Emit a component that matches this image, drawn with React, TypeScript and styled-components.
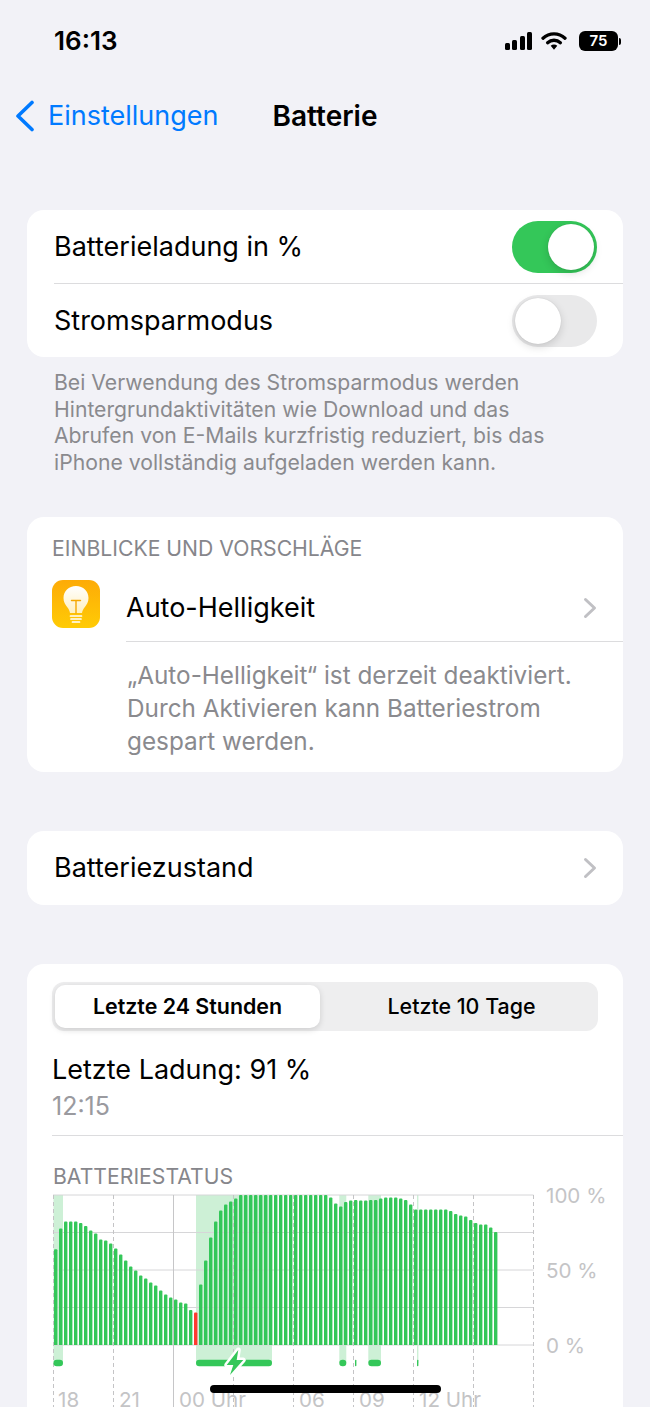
import React from 'react';
import styled, { createGlobalStyle } from 'styled-components';

const GlobalStyle = createGlobalStyle`
  html, body {
    margin: 0;
    padding: 0;
    background: #f2f2f7;
  }
  body {
    font-family: Inter, "Liberation Sans", sans-serif;
    color: #000;
  }
`;

// battery level per bar, left to right
const levels = [
  63.8, 77.6, 82.4, 82.4, 82.4, 81.3, 79.3, 76.4, 74.4, 70.4, 69.6, 67.6, 64.4, 60.4, 56.4,
  52.4, 49.6, 46.4, 44.4, 41.6, 39.6, 36.4, 33.6, 31.6, 30.4, 28.4, 27.6, 23.3, 21.6, 40.4,
  56.4, 71.6, 82.4, 89.6, 93.6, 95.6, 97.6, 100, 100, 100, 100, 100, 100, 100, 100, 100,
  100, 100, 100, 100, 100, 100, 100, 100, 100, 98.4, 94.4, 92.4, 95.3, 96.4, 96.7, 96.4,
  96.4, 96.7, 96.7, 97.6, 98.4, 98.4, 98.4, 97.6, 96.7, 93.6, 90.4, 90.4, 90.4, 90.4, 90.4,
  90.4, 90.4, 89.3, 87.3, 86.4, 85.6, 83.3, 81.3, 80.4, 80.4, 78.4, 75.3,
];
const RED_BAR = 28;

// all chart coordinates are relative to the svg corner
const PLOT_TOP = 1;
const PLOT_BOTTOM = 151;
const PILL_Y = 169;
const gridX = [0.5, 60.5, 120.5, 180.5, 240.5, 300.5, 360.5, 420.5, 480.5];
const SOLID_X = 120.5;
const gridY = [1, 38.5, 76, 113.5, 151];
const charging = [
  { x: 0.5, w: 9.5, pill: true, band: true },
  { x: 143, w: 76, pill: true, band: true },
  { x: 286.3, w: 7, pill: true, band: true },
  { x: 302, w: 1.4, pill: true, band: false },
  { x: 315.3, w: 12.7, pill: true, band: true },
  { x: 364, w: 1.4, pill: true, band: true },
];
const hours = [
  { x: 5, label: '18' },
  { x: 66, label: '21' },
  { x: 126, label: '00 Uhr' },
  { x: 246, label: '06' },
  { x: 306, label: '09' },
  { x: 366, label: '12 Uhr' },
];
const percents = [
  { y: 9, label: '100 %' },
  { y: 84, label: '50 %' },
  { y: 159, label: '0 %' },
];

const Chevron = () => (
  <ChevronIcon viewBox="0 0 14 22" fill="none">
    <path d="M2.5 2.5 11.5 11 2.5 19.5" stroke="#c0c0c4" strokeWidth="3" strokeLinecap="round" strokeLinejoin="round" />
  </ChevronIcon>
);

const BulbIcon = () => (
  <IconTile>
    <svg width="48" height="48" viewBox="0 0 48 48" fill="none">
      <defs>
        <linearGradient id="glass" x1="0" y1="0" x2="0" y2="1">
          <stop offset="0" stopColor="#ffffff" />
          <stop offset="1" stopColor="#fff0c0" />
        </linearGradient>
      </defs>
      <path
        d="M24 6c-7.300 0-12.500 5.400-12.500 12 0 3.800 1.700 6.500 3.600 9 1.400 1.800 2.500 3.700 2.900 6h12c.4-2.300 1.500-4.200 2.900-6 1.900-2.500 3.600-5.200 3.600-9C36.500 11.400 31.300 6 24 6z"
        fill="url(#glass)"
      />
      <path d="M19.500 20.500h9M24 20.500V33" stroke="#f5a800" strokeWidth="1.400" strokeLinecap="round" />
      <path d="M18.500 36h11M19 39h10M20.500 42h7" stroke="#fff" strokeWidth="1.700" strokeLinecap="round" />
    </svg>
  </IconTile>
);

const WifiIcon = () => (
  <svg width="26" height="20" viewBox="0 0 26 20" fill="none">
    <path d="M2 7.200C8.200 1.500 17.800 1.500 24 7.200" stroke="#000" strokeWidth="3.300" strokeLinecap="round" />
    <path d="M6.600 11.700c3.700-3.300 9.100-3.300 12.800 0" stroke="#000" strokeWidth="3.300" strokeLinecap="round" />
    <path d="M9.700 14.800 13 18.700l3.300-3.900c-1.900-1.600-4.700-1.600-6.600 0z" fill="#000" />
  </svg>
);

const BatteryChart = () => (
  <ChartSvg width="570" height="213" viewBox="0 0 570 213">
    {charging.filter((c) => c.band).map((c) => (
      <rect key={c.x} x={c.x} y={PLOT_TOP} width={c.w} height={PILL_Y - PLOT_TOP} fill="#cdf0d6" />
    ))}
    {gridY.map((y) => (
      <line key={y} x1="0" x2="480.5" y1={y} y2={y} stroke="#d6d6d8" strokeWidth="1" />
    ))}
    {gridX.map((x) => (
      <line
        key={x}
        x1={x}
        x2={x}
        y1={PLOT_TOP}
        y2="213"
        stroke={x === SOLID_X ? '#c6c6c8' : '#c4c4c6'}
        strokeWidth="1"
        strokeDasharray={x === SOLID_X ? undefined : '4 3'}
      />
    ))}
    {levels.map((level, i) => {
      const h = (level / 100) * 150;
      return (
        <path
          key={i}
          d={`M${1 + i * 5} ${PLOT_BOTTOM}v${-h + 1}q0 -1 1 -1h1.400q1 0 1 1v${h - 1}z`}
          fill={i === RED_BAR ? '#ff3b30' : '#34c759'}
        />
      );
    })}
    {charging.filter((c) => c.pill).map((c) => (
      <rect key={c.x} x={c.x} y={PILL_Y - 3.2} width={c.w} height="6.400" rx={Math.min(3.2, c.w / 2)} fill="#34c759" />
    ))}
    <path
      d="M185.300 156 173.700 171H180.300L177 181 190.300 166H183.700z"
      fill="#34c759"
      stroke="#fff"
      strokeWidth="5"
      strokeLinejoin="round"
      paintOrder="stroke"
    />
    {percents.map((p) => (
      <AxisText key={p.label} x="493" y={p.y}>{p.label}</AxisText>
    ))}
    {hours.map((h) => (
      <AxisText key={h.label} x={h.x} y="213">{h.label}</AxisText>
    ))}
  </ChartSvg>
);

const App: React.FC = () => (
  <Page>
    <GlobalStyle />
    <StatusBar>
      <Clock>16:13</Clock>
      <StatusIcons>
        <Signal>
          {[7, 10, 14, 18].map((h) => (
            <SignalBar key={h} style={{ height: h }} />
          ))}
        </Signal>
        <WifiIcon />
        <Battery>
          <BatteryBody>75</BatteryBody>
          <BatteryNub />
        </Battery>
      </StatusIcons>
    </StatusBar>

    <NavBar>
      <BackLink>
        <svg width="20" height="32" viewBox="0 0 20 32" fill="none">
          <path d="M17 2.500 3 16l14 13.500" stroke="#007aff" strokeWidth="3.600" strokeLinecap="round" strokeLinejoin="round" />
        </svg>
        Einstellungen
      </BackLink>
      <NavTitle>Batterie</NavTitle>
    </NavBar>

    <Card $top={74}>
      <Row>
        <RowLabel>Batterieladung in %</RowLabel>
        <Toggle $on><Knob /></Toggle>
      </Row>
      <RowDivider />
      <Row>
        <RowLabel>Stromsparmodus</RowLabel>
        <Toggle><Knob /></Toggle>
      </Row>
    </Card>
    <Footnote>
      Bei Verwendung des Stromsparmodus werden
      <br />
      Hintergrundaktivitäten wie Download und das
      <br />
      Abrufen von E-Mails kurzfristig reduziert, bis das
      <br />
      iPhone vollständig aufgeladen werden kann.
    </Footnote>

    <Card $top={42}>
      <InsightHeader>EINBLICKE UND VORSCHLÄGE</InsightHeader>
      <InsightRow>
        <BulbIcon />
        <InsightMain>
          <RowLabel>Auto-Helligkeit</RowLabel>
          <Chevron />
        </InsightMain>
      </InsightRow>
      <InsightText>
        „Auto-Helligkeit“ ist derzeit deaktiviert.
        <br />
        Durch Aktivieren kann Batteriestrom
        <br />
        gespart werden.
      </InsightText>
    </Card>

    <Card $top={59}>
      <Row $height={74}>
        <RowLabel>Batteriezustand</RowLabel>
        <Chevron />
      </Row>
    </Card>

    <ChartCard $top={59}>
      <Segments>
        <Segment $active>Letzte 24 Stunden</Segment>
        <Segment>Letzte 10 Tage</Segment>
      </Segments>
      <LastCharge>Letzte Ladung: 91 %</LastCharge>
      <LastTime>12:15</LastTime>
      <ChartDivider />
      <ChartTitle>BATTERIESTATUS</ChartTitle>
      <BatteryChart />
    </ChartCard>

    <HomeIndicator />
  </Page>
);

const Page = styled.div`
  position: relative;
  width: 650px;
  height: 1407px;
  overflow: hidden;
  background: #f2f2f7;
`;

const StatusBar = styled.div`
  display: flex;
  align-items: center;
  justify-content: space-between;
  height: 30px;
  padding: 26px 29px 0 54px;
`;

const Clock = styled.div`
  font-size: 26px;
  font-weight: 600;
  line-height: 30px;
`;

const StatusIcons = styled.div`
  display: flex;
  align-items: center;
  gap: 9px;
`;

const Signal = styled.div`
  display: flex;
  align-items: flex-end;
  gap: 2.5px;
  height: 18px;
`;

const SignalBar = styled.div`
  width: 5px;
  border-radius: 1.5px;
  background: #000;
`;

const Battery = styled.div`
  display: flex;
  align-items: center;
  gap: 1px;
  margin-left: 3px;
`;

const BatteryBody = styled.div`
  width: 39px;
  height: 20px;
  border-radius: 6px;
  background: #000;
  color: #fff;
  font-size: 15px;
  font-weight: 600;
  line-height: 20px;
  text-align: center;
`;

const BatteryNub = styled.div`
  width: 2px;
  height: 7px;
  border-radius: 0 2px 2px 0;
  background: #000;
`;

const NavBar = styled.div`
  display: grid;
  grid-template-columns: 1fr auto 1fr;
  align-items: center;
  height: 40px;
  margin-top: 40px;
`;

const BackLink = styled.div`
  display: flex;
  align-items: center;
  gap: 13px;
  padding-left: 15px;
  color: #007aff;
  font-size: 27px;
  line-height: 40px;
  margin-right: -60px;
`;

const NavTitle = styled.div`
  font-size: 28px;
  font-weight: 600;
  line-height: 40px;
`;

const Card = styled.div<{ $top: number }>`
  margin: ${({ $top }) => $top}px 27px 0;
  background: #fff;
  border-radius: 17px;
  overflow: hidden;
`;

const Row = styled.div<{ $height?: number }>`
  display: flex;
  align-items: center;
  justify-content: space-between;
  height: ${({ $height }) => $height ?? 73}px;
  padding: 0 26px 0 27px;
`;

const RowLabel = styled.div`
  font-size: 27px;
  line-height: 36px;
`;

const RowDivider = styled.div`
  height: 1px;
  margin-left: 27px;
  background: #dcdcde;
`;

const Toggle = styled.div<{ $on?: boolean }>`
  display: flex;
  justify-content: ${({ $on }) => ($on ? 'flex-end' : 'flex-start')};
  align-items: center;
  width: 85px;
  height: 52px;
  padding: 0 3px;
  box-sizing: border-box;
  border-radius: 26px;
  background: ${({ $on }) => ($on ? '#34c759' : '#e9e9ea')};
`;

const Knob = styled.div`
  width: 46px;
  height: 46px;
  border-radius: 50%;
  background: #fff;
  box-shadow: 0 3px 8px rgba(0, 0, 0, 0.15), 0 0 1px rgba(0, 0, 0, 0.16);
`;

const Footnote = styled.div`
  margin: 12px 40px 0 54px;
  color: #8a8a8e;
  font-size: 21.2px;
  line-height: 26.5px;
`;

const InsightHeader = styled.div`
  padding: 19px 0 0 25px;
  color: #86868b;
  font-size: 21.2px;
  line-height: 24px;
`;

const InsightRow = styled.div`
  display: flex;
  align-items: stretch;
  gap: 26px;
  margin-top: 20px;
  padding-left: 25px;
`;

const IconTile = styled.div`
  flex: none;
  width: 48px;
  height: 48px;
  border-radius: 11px;
  background: linear-gradient(180deg, #fdab07 0%, #ffcb05 100%);
`;

const InsightMain = styled.div`
  flex: 1;
  display: flex;
  align-items: center;
  justify-content: space-between;
  height: 67px;
  margin-top: -6px;
  padding-right: 26px;
  border-bottom: 1px solid #dcdcde;
`;

const InsightText = styled.div`
  padding: 17px 30px 14px 100px;
  color: #8a8a8e;
  font-size: 24.3px;
  line-height: 33px;
`;

const ChevronIcon = styled.svg`
  width: 14px;
  height: 22px;
  flex: none;
`;

const ChartCard = styled(Card)`
  height: 500px;
`;

const Segments = styled.div`
  display: grid;
  grid-template-columns: 265px 1fr;
  align-items: center;
  height: 49px;
  margin: 18px 25px 0;
  padding: 0 3px;
  box-sizing: border-box;
  border-radius: 12px;
  background: #eeeeef;
`;

const Segment = styled.div<{ $active?: boolean }>`
  height: 43px;
  padding-left: ${({ $active }) => ($active ? 0 : 8)}px;
  border-radius: 10px;
  background: ${({ $active }) => ($active ? '#fff' : 'transparent')};
  box-shadow: ${({ $active }) => ($active ? '0 2px 6px rgba(0, 0, 0, 0.14)' : 'none')};
  font-size: 21.4px;
  font-weight: ${({ $active }) => ($active ? 600 : 500)};
  line-height: 43px;
  text-align: center;
`;

const LastCharge = styled.div`
  margin: 21px 0 0 25px;
  font-size: 27px;
  line-height: 36px;
`;

const LastTime = styled.div`
  margin: 3px 0 0 25px;
  color: #9a9a9f;
  font-size: 25px;
  line-height: 31px;
`;

const ChartDivider = styled.div`
  height: 1px;
  margin: 13px 0 0 25px;
  background: #dcdcde;
`;

const ChartTitle = styled.div`
  margin: 28px 0 0 26px;
  color: #86868b;
  font-size: 21.2px;
  line-height: 24px;
`;

const ChartSvg = styled.svg`
  display: block;
  margin: 6px 0 0 26px;
  overflow: visible;
`;

const AxisText = styled.text`
  fill: #c4c4c6;
  font-family: Inter, "Liberation Sans", sans-serif;
  font-size: 20.6px;
`;

const HomeIndicator = styled.div`
  position: absolute;
  left: 210px;
  top: 1385px;
  width: 231px;
  height: 8px;
  border-radius: 4px;
  background: #000;
`;

export default App;
